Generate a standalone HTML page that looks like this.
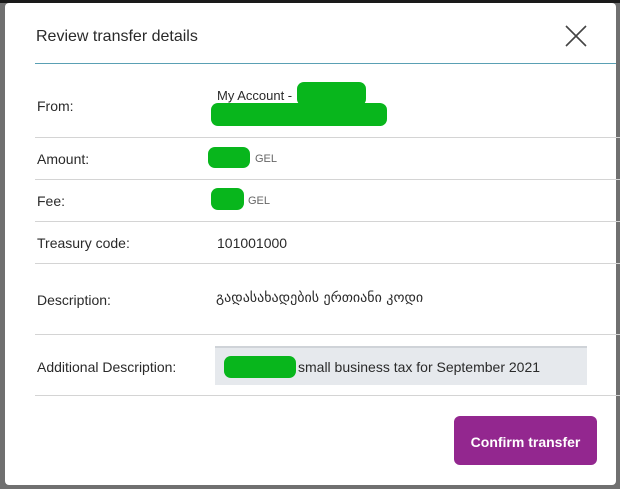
<!DOCTYPE html>
<html><head><meta charset="utf-8"><style>
body{margin:0;width:620px;height:489px;background:#707070;position:relative;overflow:hidden;font-family:"Liberation Sans","DejaVu Sans",sans-serif;color:#222;}
.top{position:absolute;left:0;top:0;width:620px;height:3px;background:#1a1a1a}
.m{position:absolute;left:5px;top:3px;width:611px;height:482px;background:#fff;border-radius:4px}
.t{position:absolute;font-size:14px;white-space:nowrap;color:#2a2a2a}
.l{position:absolute;left:35px;right:0;height:1px;background:#d4d4d4}
.g{position:absolute;background:#08b61c;border-radius:7px}
.gel{position:absolute;font-size:11px;color:#666}
</style></head><body>
<div class="top"></div>
<div class="m"></div>
<div class="t" style="left:36px;top:28px;font-size:16px">Review transfer details</div>
<svg style="position:absolute;left:564px;top:24px" width="24" height="24"><path d="M2 2L22 22M22 2L2 22" stroke="#444" stroke-width="1.6" fill="none"/></svg>
<div style="position:absolute;left:35px;right:4px;top:63px;height:1px;background:#5aa0b4"></div>
<div class="t" style="left:37px;top:98px">From:</div>
<div class="t" style="left:217px;top:88px;font-size:13px">My Account -</div>
<div class="g" style="left:297px;top:82px;width:69px;height:24px"></div>
<div class="g" style="left:211px;top:103px;width:176px;height:23px"></div>
<div class="l" style="top:137px"></div>
<div class="t" style="left:37px;top:151px">Amount:</div>
<div class="g" style="left:208px;top:147px;width:42px;height:21px"></div>
<div class="gel" style="left:255px;top:153px">GEL</div>
<div class="l" style="top:179px"></div>
<div class="t" style="left:37px;top:193px">Fee:</div>
<div class="g" style="left:211px;top:188px;width:33px;height:22px"></div>
<div class="gel" style="left:248px;top:195px">GEL</div>
<div class="l" style="top:221px"></div>
<div class="t" style="left:37px;top:235px">Treasury code:</div>
<div class="t" style="left:217px;top:235px">101001000</div>
<div class="l" style="top:263px"></div>
<div class="t" style="left:37px;top:292px">Description:</div>
<div class="t" style="left:216px;top:290px;font-family:'DejaVu Sans',sans-serif;font-size:14px">გადასახადების ერთიანი კოდი</div>
<div class="l" style="top:334px"></div>
<div class="t" style="left:37px;top:359px">Additional Description:</div>
<div style="position:absolute;left:215px;top:346px;width:372px;height:37px;background:#e6e9ed;border-top:2px solid #cfd3d8"></div>
<div class="g" style="left:224px;top:356px;width:72px;height:22px"></div>
<div class="t" style="left:298px;top:359px">small business tax for September 2021</div>
<div class="l" style="top:395px"></div>
<div style="position:absolute;left:454px;top:416px;width:143px;height:49px;background:#93278f;border-radius:6px;color:#fff;font-weight:bold;font-size:14px;line-height:52px;text-align:center">Confirm transfer</div>
</body></html>
